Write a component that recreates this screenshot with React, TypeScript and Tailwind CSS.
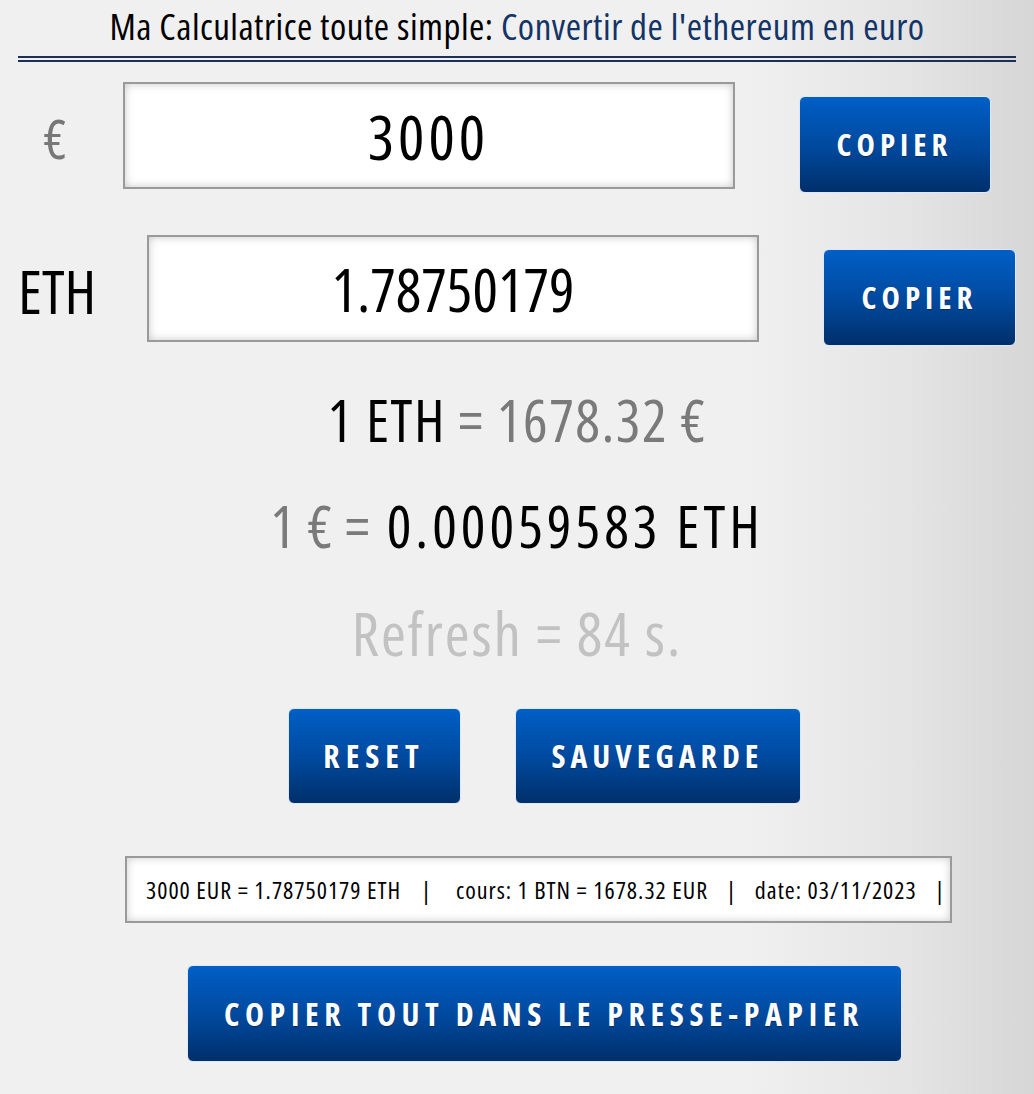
const font = '"Open Sans","Roboto Condensed",sans-serif'

function BlueButton({ label, className }: { label: string; className: string }) {
  return (
    <button
      className={`flex shrink-0 items-center justify-center whitespace-nowrap rounded-[6px] border border-[#dbe9fb] bg-[linear-gradient(to_bottom,#005fc6,#00489c_55%,#002f6a)] font-bold text-white [text-shadow:0_1px_1px_rgba(0,0,0,0.35)] ${className}`}
    >
      {label}
    </button>
  )
}

function Field({ value, className }: { value: string; className: string }) {
  return (
    <div
      className={`flex h-[107px] w-[612px] items-center justify-center border-2 border-[#9a9a9a] bg-white leading-none text-black shadow-[inset_0_0_9px_rgba(0,0,0,0.22)] ${className}`}
    >
      {value}
    </div>
  )
}

export default function App() {
  return (
    <div
      className="min-h-[1094px] w-full bg-[linear-gradient(to_right,#f0f0f0_0%,#f0f0f0_72%,#e4e4e4_88%,#d6d6d6_100%)] font-medium"
      style={{ fontFamily: font, fontStretch: 'condensed' }}
    >
      <h1 className="h-[48px] pt-[4px] text-center text-[37px] leading-[44px] font-medium tracking-[0.5px] whitespace-nowrap text-black">
        Ma Calculatrice toute simple: <span className="text-[#133466]">Convertir de l'ethereum en euro</span>
      </h1>
      <div className="mx-[18px] mt-[8px] h-[6px] border-y-2 border-[#1b2f57]" />

      <div className="mt-[20px] flex items-start justify-center">
        <span className="w-[23px] self-center text-center text-[54px] leading-none text-[#777777]">€</span>
        <div className="ml-[56px]">
          <Field value="3000" className="text-[62px] tracking-[4px]" />
        </div>
        <BlueButton label="COPIER" className="ml-[64px] mt-[14px] h-[97px] w-[192px] text-[31px] tracking-[5px]" />
      </div>

      <div className="mt-[42px] flex items-start justify-center">
        <span className="w-[76px] self-center text-center text-[60px] leading-none text-black">ETH</span>
        <div className="ml-[53px]">
          <Field value="1.78750179" className="text-[60px]" />
        </div>
        <BlueButton label="COPIER" className="ml-[64px] mt-[14px] h-[97px] w-[193px] text-[31px] tracking-[5px]" />
      </div>

      <p className="mt-[39px] text-center text-[58px] leading-[70px] tracking-[1.5px] whitespace-nowrap">
        <span className="text-black">1 ETH</span> <span className="text-[#7a7a7a]">= 1678.32 €</span>
      </p>
      <p className="mt-[36px] text-center text-[58px] leading-[70px] whitespace-nowrap">
        <span className="tracking-[1px] text-[#7a7a7a]">1 € =</span>
        <span className="ml-[16px] tracking-[4px] text-black">0.00059583 ETH</span>
      </p>
      <p className="mt-[37px] text-center text-[60px] leading-[70px] tracking-[2px] whitespace-nowrap text-[#c2c2c2]">
        Refresh = 84 s.
      </p>

      <div className="ml-[54px] mt-[40px] flex justify-center gap-[54px]">
        <BlueButton label="RESET" className="h-[96px] w-[173px] text-[32px] tracking-[6px]" />
        <BlueButton label="SAUVEGARDE" className="h-[96px] w-[286px] text-[32px] tracking-[5px]" />
      </div>

      <div className="ml-[43px] mt-[52px] flex justify-center">
        <div className="flex h-[67px] w-[827px] items-center whitespace-nowrap border-2 border-[#9a9a9a] bg-white pl-[19px] text-[24px] tracking-[1px] text-black shadow-[inset_0_0_8px_rgba(0,0,0,0.2)]">
          <span>3000 EUR = 1.78750179 ETH</span>
          <span className="ml-[20px]">|</span>
          <span className="ml-[24px]">cours: 1 BTN = 1678.32 EUR</span>
          <span className="ml-[18px]">|</span>
          <span className="ml-[18px]">date: 03/11/2023</span>
          <span className="ml-[18px]">|</span>
        </div>
      </div>

      <div className="ml-[54px] mt-[42px] flex justify-center">
        <BlueButton label="COPIER TOUT DANS LE PRESSE-PAPIER" className="h-[97px] w-[715px] text-[32px] tracking-[5.6px]" />
      </div>
    </div>
  )
}
